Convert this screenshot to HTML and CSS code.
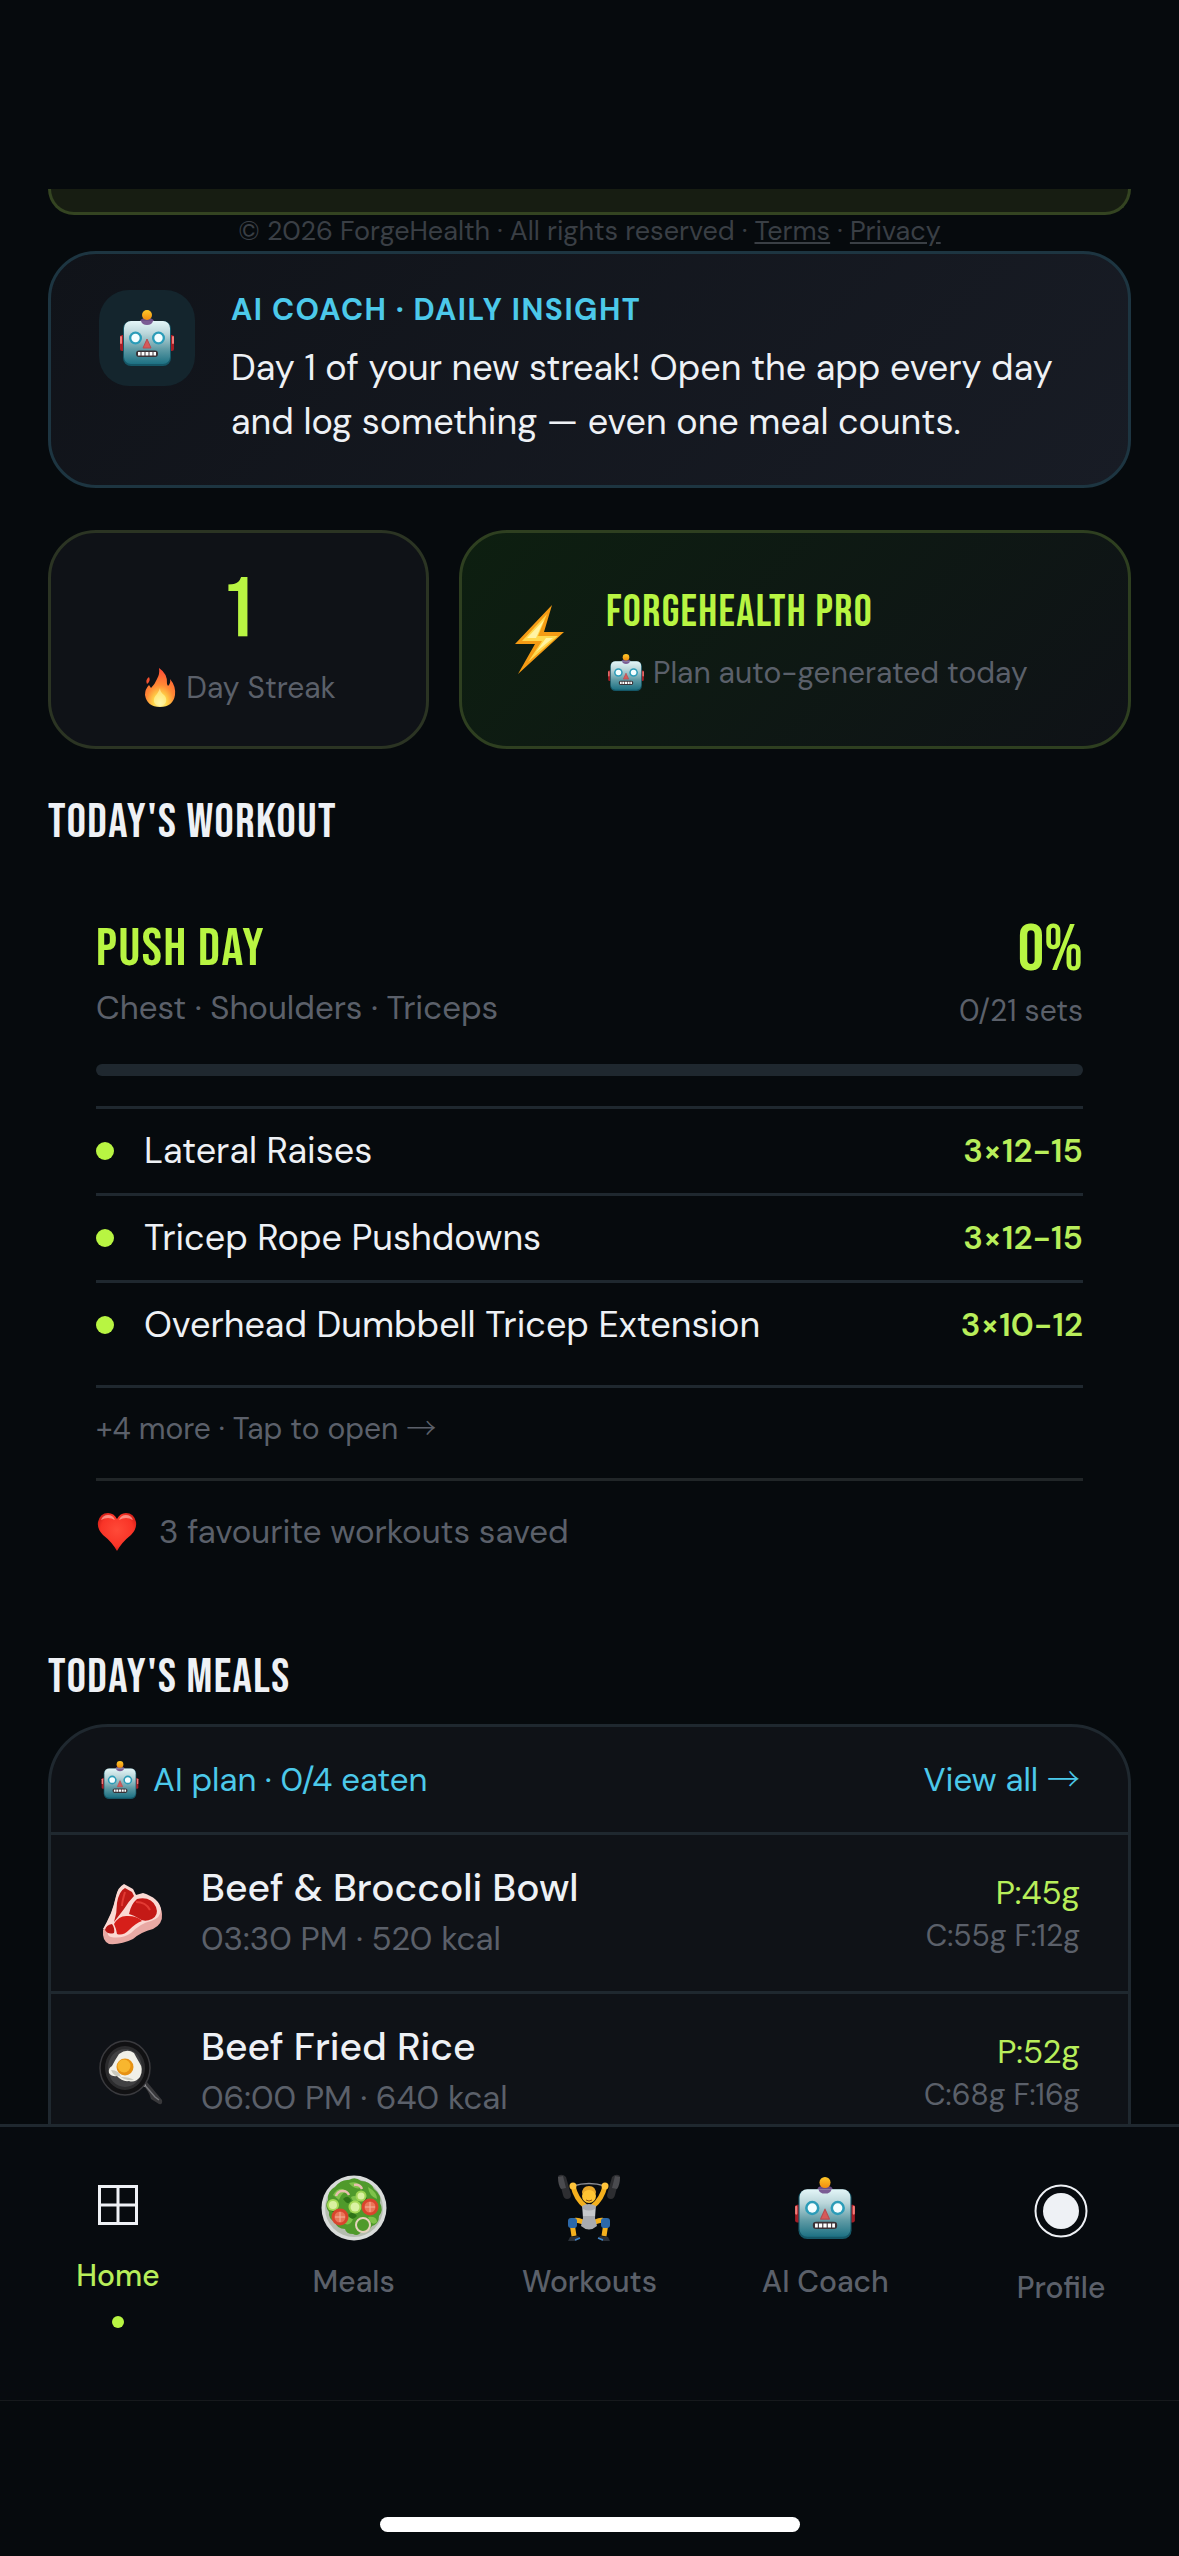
FILE: index.html
```html
<!DOCTYPE html>
<html lang="en">
<head>
  <meta charset="UTF-8" />
  <meta name="viewport" content="width=device-width, initial-scale=1.0" />
  <title>ForgeHealth</title>
  <link rel="stylesheet" href="styles.css">
</head>
<body>
  <!-- shared robot icon -->
  <svg class="sprite" aria-hidden="true">
    <defs>
      <linearGradient id="botFace" x1="0" y1="0" x2="0" y2="1">
        <stop offset="0" stop-color="#e4f6f8" />
        <stop offset="0.3" stop-color="#b9d5d9" />
        <stop offset="0.65" stop-color="#619ca6" />
        <stop offset="1" stop-color="#1d7183" />
      </linearGradient>
      <linearGradient id="botBall" x1="0" y1="0" x2="0" y2="1">
        <stop offset="0" stop-color="#ffc928" />
        <stop offset="1" stop-color="#f08c10" />
      </linearGradient>
    </defs>
    <symbol id="robot" viewBox="0 0 54 56">
      <rect x="0" y="25" width="6" height="16" rx="2" fill="#a51d25" />
      <rect x="48" y="25" width="6" height="16" rx="2" fill="#a51d25" />
      <rect x="0" y="26" width="2" height="8" rx="1" fill="#f27b78" />
      <rect x="52" y="26" width="2" height="8" rx="1" fill="#f27b78" />
      <path d="M20 11q1-3 7-3t7 3q-1 5-7 5t-7-5z" fill="#6c4f86" />
      <circle cx="27" cy="5" r="5" fill="url(#botBall)" />
      <rect x="3" y="11" width="48" height="45" rx="8" fill="#155767" />
      <rect x="4" y="11" width="46" height="43" rx="7" fill="url(#botFace)" />
      <path d="M21 11h12q-1 4-6 4t-6-4z" fill="#7a5c94" />
      <circle cx="15.5" cy="28" r="6.5" fill="#2b9cb8" />
      <circle cx="38.5" cy="28" r="6.5" fill="#2b9cb8" />
      <circle cx="15.5" cy="28" r="4.2" fill="#f4feff" />
      <circle cx="38.5" cy="28" r="4.2" fill="#f4feff" />
      <path d="M27 29l4 9h-8z" fill="#d65a59" stroke="#b94a50" stroke-linejoin="round" />
      <rect x="16" y="40.500" width="22" height="6.500" rx="3" fill="#3a3236" />
      <path d="M18 42h2.500v3.500h-2.500zM21.500 42h3v3.500h-3zM25.500 42h3v3.500h-3zM29.500 42h3v3.500h-3zM33.500 42h2.500v3.500h-2.500z" fill="#fff" />
    </symbol>
  </svg>

  <div class="status-area"></div>

  <main class="content">
    <div class="banner"></div>
    <p class="legal">© 2026 ForgeHealth · All rights reserved · <a href="#">Terms</a> · <a href="#">Privacy</a></p>

    <section class="card insight">
      <div class="insight-icon"><svg width="54" height="56"><use href="#robot" /></svg></div>
      <div>
        <h3 class="insight-label">AI COACH · DAILY INSIGHT</h3>
        <p class="insight-text">Day 1 of your new streak! Open the app every day and log something — even one meal counts.</p>
      </div>
    </section>

    <div class="stats">
      <div class="card streak">
        <div class="streak-number">1</div>
        <div class="with-icon small">
          <svg width="38" height="40" viewBox="0 0 34 40">
            <defs>
              <radialGradient id="flame" cx="0.5" cy="0.9" r="0.85">
                <stop offset="0" stop-color="#fff8b0" />
                <stop offset="0.25" stop-color="#ffd84a" />
                <stop offset="0.55" stop-color="#ff8a35" />
                <stop offset="1" stop-color="#ff4f35" />
              </radialGradient>
            </defs>
            <path d="M16 0q9 6 8 16l1 2q3-3 2-7 6 7 5 16-2 12-15 12T2 27q0-6 4-10l2 3q4-4 6-9 3-5 2-11z" fill="url(#flame)" />
            <path d="M6 9q-4 3-2 7 4-3 2-7z" fill="#f4502f" />
            <path d="M17 20q0 4 4 7 3 3 2 7-2 4-6 4t-6-4q-1-4 3-8 2-3 3-6z" fill="#fff6a8" opacity="0.6" />
          </svg>
          <span>Day Streak</span>
        </div>
      </div>

      <div class="card pro">
        <svg width="60" height="72" viewBox="0 0 60 72">
          <path d="M42 1L5 40h20L8 70l46-42H34z" fill="#f49b14" />
          <path d="M37 10L12 37h20L18 58l30-26H28z" fill="#ffd84d" />
          <path d="M34 16L17 34h19L26 48l17-14H26z" fill="#fff3a3" />
        </svg>
        <div class="pro-body">
          <h3 class="pro-title">FORGEHEALTH PRO</h3>
          <div class="with-icon small">
            <svg width="40" height="37"><use href="#robot" /></svg>
            <span>Plan auto-generated today</span>
          </div>
        </div>
      </div>
    </div>

    <h2>TODAY'S WORKOUT</h2>
    <section class="workout">
      <div class="workout-head">
        <div>
          <h3 class="workout-name">PUSH DAY</h3>
          <p class="workout-sub">Chest · Shoulders · Triceps</p>
        </div>
        <div class="workout-score">
          <div class="percent">0%</div>
          <p class="sets">0/21 sets</p>
        </div>
      </div>
      <div class="progress"></div>
      <ul class="exercises">
        <li><span class="dot"></span><span class="name">Lateral Raises</span><span class="reps">3×12-15</span></li>
        <li><span class="dot"></span><span class="name">Tricep Rope Pushdowns</span><span class="reps">3×12-15</span></li>
        <li><span class="dot"></span><span class="name">Overhead Dumbbell Tricep Extension</span><span class="reps">3×10-12</span></li>
      </ul>
      <a class="more" href="#">+4 more · Tap to open <span class="arrow">→</span></a>
      <div class="favourites">
        <svg width="42" height="42" viewBox="0 0 42 42">
          <defs>
            <radialGradient id="heart" cx="0.5" cy="0.45" r="0.6">
              <stop offset="0" stop-color="#ff4a38" />
              <stop offset="0.7" stop-color="#f93427" />
              <stop offset="1" stop-color="#c81a14" />
            </radialGradient>
          </defs>
          <path d="M21 40Q16 31 7 24 1 18 2 11 4 2 12 2q6 0 9 6 3-6 9-6 8 0 10 9 1 7-5 13-9 7-14 16z" fill="url(#heart)" />
          <path d="M5 9q2-5 7-5t7 5q-7-4-14 0zM23 9q2-5 7-5t7 5q-7-4-14 0z" fill="#ffb0a6" opacity="0.7" />
        </svg>
        <span>3 favourite workouts saved</span>
      </div>
    </section>

    <h2>TODAY'S MEALS</h2>
    <section class="card meals">
      <div class="meals-head">
        <div class="with-icon">
          <svg width="42" height="38"><use href="#robot" /></svg>
          <span>AI plan · 0/4 eaten</span>
        </div>
        <a href="#">View all <span class="arrow">→</span></a>
      </div>
      <div class="meal">
        <svg width="66" height="66" viewBox="0 0 66 66">
          <path d="M4 50q4-7 8-16 3-8 5-17 2-9 8-12l9 5 3 6 7-2q18 6 19 20 1 10-9 15-12 3-20 10-12 6-24 5-7-3-6-14z" fill="#e9a9a4" />
          <path d="M4 49q4-7 8-16 3-8 5-17 2-9 8-12l9 5 3 6 7-2q16 5 18 16 0 9-10 12-10 2-20 12-9 6-20 4-4-1-4-8z" fill="#fbd9d3" />
          <path d="M18 23q2-12 8-15l7 4 2 4q-6 6-10 13l-10 13q3-9 3-19z" fill="#bf1a17" />
          <path d="M38 19q14-3 19 8 3 8-4 12-8 4-14-1-5-3-9-4 2-10 8-15z" fill="#c41916" />
          <path d="M15 44q5-9 14-8 9 0 14 5-6 2-13 9-6 6-12 4-1-6-3-10z" fill="#d61f1a" />
          <path d="M6 50q1-5 7-6 3 4 2 9-6 2-9-3z" fill="#b81613" />
          <path d="M37 22q10 0 14 8M26 12q-3 10-3 14" fill="none" stroke="#e23a33" stroke-width="2" />
        </svg>
        <div class="meal-info">
          <h4>Beef &amp; Broccoli Bowl</h4>
          <p>03:30 PM · 520 kcal</p>
        </div>
        <div class="macros"><div class="protein">P:45g</div><div class="rest">C:55g F:12g</div></div>
      </div>
      <div class="meal">
        <svg width="66" height="66" viewBox="0 0 66 66">
          <path d="M43 45l5-2 15 18q1 5-3 4L52 60q-2-8-9-15z" fill="#38383b" />
          <path d="M44 44l12 14 4 3" stroke="#77777b" stroke-width="1.500" fill="none" />
          <circle cx="44" cy="45" r="3" fill="#a8a8ac" />
          <ellipse cx="26" cy="29" rx="25" ry="27" fill="#111113" stroke="#3a3a3e" stroke-width="1.500" />
          <ellipse cx="26" cy="29" rx="20" ry="22" fill="#2c2c2e" />
          <ellipse cx="26" cy="29" rx="17" ry="19" fill="#414143" />
          <path d="M20 15q8-6 15-1 2 4 5 9 5 7 1 15-5 6-11 4-7 1-12-5-5 1-8-3-1-5 3-7 3-6 7-12z" fill="#f1f0e8" />
          <path d="M12 31q8 0 10 7 9 0 13 3-9 1-15-4-5 1-8-6z" fill="#c9c9bd" />
          <circle cx="26" cy="28" r="8.500" fill="#e79213" />
          <circle cx="25" cy="27" r="6.500" fill="#f8b62e" />
        </svg>
        <div class="meal-info">
          <h4>Beef Fried Rice</h4>
          <p>06:00 PM · 640 kcal</p>
        </div>
        <div class="macros"><div class="protein">P:52g</div><div class="rest">C:68g F:16g</div></div>
      </div>
    </section>
  </main>

  <nav class="tabs">
    <a class="tab active" href="#">
      <span class="tab-icon short">
        <svg width="40" height="40" viewBox="0 0 40 40" fill="none" stroke="#eef1f5" stroke-width="3">
          <path d="M1.500 1.500h37v37h-37zM20 1v38M1 20h38" />
        </svg>
      </span>
      <span>Home</span>
      <span class="tab-dot"></span>
    </a>
    <a class="tab" href="#">
      <span class="tab-icon">
        <svg width="66" height="66" viewBox="0 0 66 66">
          <circle cx="33" cy="33" r="32.500" fill="#d9dcda" />
          <circle cx="33" cy="33" r="29" fill="#b5bdb0" />
          <path d="M14 12q6-8 14-7 6-4 12 1 9 0 13 8 8 6 6 14 4 7-1 13 0 8-7 10-3 6-10 5-4 6-9 3-7 0-8-5-8 0-10-7-7-3-6-10-5-6-1-12-1-9 7-13z" fill="#4f9a2b" />
          <path d="M12 20q6-10 13-4-5 3-7 9zM28 8q9-3 12 5-7 2-12-5zM47 12q9 5 9 12-8-3-9-12zM20 47q6-8 12-3-3 9-12 3zM47 42q9-1 9 5-5 5-9-5zM30 22q6-3 8 4-6 3-8-4z" fill="#7fc24a" />
          <path d="M22 24q5-5 8 1-2 7-8-1zM42 20q5 2 5 7-6-1-5-7zM27 40q5-5 9 1-5 6-9-1zM14 38q-6-2-5-7 6 1 5 7z" fill="#2f7418" />
          <path d="M15 21a7 7 0 0 1 13-1M33 10q6-1 8 4" fill="none" stroke="#e7bfae" stroke-width="2.500" />
          <circle cx="12" cy="30" r="6" fill="#a6d957" /><circle cx="12" cy="30" r="4" fill="#d9f0a0" />
          <circle cx="40" cy="21" r="5.500" fill="#9fd352" /><circle cx="40" cy="21" r="3.500" fill="#d9f0a0" />
          <circle cx="34" cy="32" r="6.500" fill="#a6d957" /><circle cx="34" cy="32" r="4.500" fill="#daf2a4" />
          <circle cx="49" cy="32" r="8.500" fill="#d8452d" /><circle cx="49" cy="32" r="5.500" fill="#ea7658" />
          <circle cx="19" cy="42" r="8.500" fill="#d8452d" /><circle cx="19" cy="42" r="5.500" fill="#ea7658" />
          <path d="M49 27v10M44 32h10M19 37v10M14 42h10" stroke="#f5b39c" />
          <circle cx="42" cy="50" r="7" fill="none" stroke="#e6d3bd" stroke-width="2" />
        </svg>
      </span>
      <span>Meals</span>
    </a>
    <a class="tab" href="#">
      <span class="tab-icon">
        <svg width="66" height="68" viewBox="0 0 66 68">
          <path d="M17 12q16-5 32 0" fill="none" stroke="#8b8d92" stroke-width="1.500" />
          <path d="M2 2q4-3 8 1l5 18q0 4-4 4-3 0-4-4z" fill="#2d2e31" />
          <path d="M64 2q-4-3-8 1l-5 18q0 4 4 4 3 0 4-4z" fill="#2d2e31" />
          <path d="M2 3q0 8 3 12l5-1-3-12zM64 3q0 8-3 12l-5-1 3-12z" fill="#4a4b4f" />
          <path d="M17 12q3 13 12 20M49 12q-3 13-12 20" stroke="#f4b01d" stroke-width="5" stroke-linecap="round" fill="none" />
          <circle cx="17" cy="12" r="3.500" fill="#ffc43a" /><circle cx="49" cy="12" r="3.500" fill="#ffc43a" />
          <path d="M27 48q-9-4-11 1l2 13M39 48q9-4 11 1l-2 13" fill="none" stroke="#f4b01d" stroke-width="5" stroke-linejoin="round" />
          <path d="M26 32q7-4 14 0l-1 12 2 8q-8 7-16 0l2-8z" fill="#a9abb0" />
          <path d="M27 35q6 3 12 0v7H27z" fill="#c6c8cb" />
          <circle cx="33" cy="22" r="7" fill="#ffc532" />
          <path d="M26 20q0-8 7-8t7 8q-3-4-7-4t-7 4z" fill="#e9a828" />
          <path d="M30 26q3 2 6 0" stroke="#8f4c12" fill="none" />
          <rect x="12" y="44" width="9" height="10" rx="3" fill="#2c68a8" />
          <rect x="45" y="44" width="9" height="10" rx="3" fill="#2c68a8" />
          <path d="M14 63l8-1 2 2-4 3h-8zM52 63l-8-1-2 2 4 3h8z" fill="#2a3038" />
          <path d="M19 66l5-2M47 66l-5-2" stroke="#3e86cc" stroke-width="1.500" />
        </svg>
      </span>
      <span>Workouts</span>
    </a>
    <a class="tab" href="#">
      <span class="tab-icon"><svg width="60" height="62"><use href="#robot" /></svg></span>
      <span>AI Coach</span>
    </a>
    <a class="tab" href="#">
      <span class="tab-icon tall">
        <svg width="54" height="54" viewBox="0 0 54 54">
          <circle cx="27" cy="27" r="25.500" fill="none" stroke="#eef1f5" stroke-width="2" />
          <circle cx="27" cy="27" r="18" fill="#eef1f5" />
        </svg>
      </span>
      <span>Profile</span>
    </a>
  </nav>

  <div class="home-area"><div class="home-bar"></div></div>
</body>
</html>
```
FILE: styles.css
```css
* {
  box-sizing: border-box;
}

body {
  margin: 0;
  height: 100vh;
  display: flex;
  flex-direction: column;
  background: #060a0d;
  color: #eef1f5;
  font-family: "DM Sans", Inter, sans-serif;
  font-size: 33px;
}

h2, h3, h4, p, ul {
  margin: 0;
  padding: 0;
  font-weight: 400;
}

svg {
  display: block;
  flex: none;
}

a {
  color: inherit;
  text-decoration: none;
}

.sprite {
  position: absolute;
  width: 0;
  height: 0;
}

.status-area {
  height: 189px;
  flex: none;
}

.content {
  flex: 1;
  min-height: 0;
  overflow: hidden;
  padding: 0 48px;
}

.banner {
  height: 26px;
  background: #171d12;
  border: 3px solid #344421;
  border-top: 0;
  border-radius: 0 0 30px 30px;
}

.legal {
  padding-bottom: 4px;
  text-align: center;
  font-size: 27px;
  line-height: 32px;
  color: #3a3f45;
}

.legal a {
  text-decoration: underline;
}

.arrow {
  font-family: "Noto Sans CJK JP", sans-serif;
  font-weight: 300;
  line-height: 1;
}

.card {
  border: 3px solid #1f282f;
  border-radius: 48px;
  background: #0f1217;
}

/* AI insight */
.insight {
  display: flex;
  gap: 36px;
  padding: 36px 48px;
  background: linear-gradient(135deg, #101319, #181c25);
  border-color: #1d3541;
}

.insight-icon {
  flex: none;
  width: 96px;
  height: 96px;
  display: flex;
  align-items: center;
  justify-content: center;
  border-radius: 30px;
  background: #14252d;
}

.insight-label {
  margin-bottom: 12px;
  font-size: 30px;
  font-weight: 700;
  line-height: 39px;
  letter-spacing: 0.05em;
  color: #4cc9ea;
}

.insight-text {
  font-size: 36px;
  line-height: 54px;
}

/* streak and plan */
.stats {
  display: grid;
  grid-template-columns: 381fr 672fr;
  gap: 30px;
  margin-top: 42px;
}

.streak {
  padding: 30px 0 36px;
  text-align: center;
  border-color: #2b3423;
}

.streak-number {
  margin-bottom: 6px;
  font-family: "Bebas Neue", sans-serif;
  font-size: 84px;
  line-height: 96px;
  color: #b8f542;
}

.with-icon {
  display: flex;
  align-items: center;
  gap: 12px;
}

.small {
  gap: 7px;
  font-size: 30px;
  color: #5b606a;
}

.streak .small {
  justify-content: center;
  line-height: 45px;
}

.pro {
  display: flex;
  align-items: center;
  gap: 36px;
  padding: 0 48px;
  background: linear-gradient(135deg, #0d1f10, #0f1217);
  border-color: #2e3f20;
}

.pro-title {
  margin-bottom: 12px;
  font-family: "Bebas Neue", sans-serif;
  font-size: 45px;
  line-height: 54px;
  letter-spacing: 0.03em;
  color: #b8f542;
}

.pro .small {
  line-height: 42px;
}

h2 {
  margin: 45px 0 17px;
  font-family: "Bebas Neue", sans-serif;
  font-size: 48px;
  line-height: 58px;
  letter-spacing: 0.03em;
}

/* workout */
.workout {
  padding: 51px 48px 48px;
}

.workout-head {
  display: flex;
  justify-content: space-between;
  margin-bottom: 33px;
  color: #5b606a;
}

.workout-name {
  margin-bottom: 6px;
  font-family: "Bebas Neue", sans-serif;
  font-size: 54px;
  line-height: 58px;
  letter-spacing: 0.03em;
  color: #b8f542;
}

.workout-sub {
  line-height: 47px;
}

.workout-score {
  text-align: right;
}

.percent {
  margin-bottom: 9px;
  font-family: "Bebas Neue", sans-serif;
  font-size: 66px;
  line-height: 62px;
  color: #b8f542;
}

.sets {
  font-size: 30px;
  line-height: 40px;
}

.progress {
  height: 12px;
  margin-bottom: 30px;
  border-radius: 6px;
  background: #1f282f;
}

.exercises {
  list-style: none;
  margin-bottom: 18px;
}

.exercises li {
  display: flex;
  align-items: center;
  gap: 30px;
  border-top: 3px solid #1f282f;
  font-size: 36px;
  line-height: 84px;
}

.dot {
  width: 18px;
  height: 18px;
  border-radius: 50%;
  background: #b8f542;
}

.name {
  flex: 1;
}

.reps {
  font-size: 33px;
  font-weight: 600;
  color: #b8ee5a;
}

.more {
  display: block;
  padding: 18px 0 27px;
  border-top: 3px solid #1f282f;
  font-size: 30px;
  line-height: 45px;
  color: #5b606a;
}

.favourites {
  display: flex;
  align-items: center;
  gap: 21px;
  padding-top: 27px;
  border-top: 3px solid #212628;
  line-height: 48px;
  color: #5b606a;
}

/* meals */
.meals {
  border-radius: 60px;
}

.meals-head {
  display: flex;
  align-items: center;
  justify-content: space-between;
  padding: 0 48px;
  line-height: 105px;
  color: #4cc9ea;
}

.meal {
  display: flex;
  align-items: center;
  gap: 36px;
  padding: 27px 48px;
  border-top: 3px solid #1f282f;
}

.meal:last-child {
  padding-bottom: 72px;
}

.meal-info {
  flex: 1;
}

.meal-info h4 {
  font-size: 39px;
  font-weight: 500;
  line-height: 51px;
}

.meal-info p {
  line-height: 51px;
  color: #5b606a;
}

.macros {
  text-align: right;
}

.protein {
  line-height: 45px;
  color: #b8ee5a;
}

.rest {
  font-size: 30px;
  line-height: 42px;
  color: #5b606a;
}

/* bottom tabs */
.tabs {
  flex: none;
  display: grid;
  grid-template-columns: repeat(5, 1fr);
  padding: 39px 0 72px;
  background: #070b0f;
  border-top: 3px solid #1f282f;
  border-bottom: 1px solid #16191c;
}

.tab {
  display: flex;
  flex-direction: column;
  align-items: center;
  font-size: 30px;
  font-weight: 500;
  line-height: 39px;
  color: #5b606a;
}

.tab.active {
  color: #b8ee5a;
}

.tab-icon {
  height: 84px;
  margin-bottom: 12px;
  display: flex;
  align-items: center;
}

.tab-icon.short {
  height: 78px;
}

.tab-icon.tall {
  height: 90px;
}

.tab-dot {
  width: 12px;
  height: 12px;
  margin-top: 21px;
  border-radius: 50%;
  background: #b8f542;
}

.home-area {
  flex: none;
  height: 155px;
  display: flex;
  align-items: flex-end;
  justify-content: center;
  padding-bottom: 24px;
}

.home-bar {
  width: 420px;
  height: 15px;
  border-radius: 8px;
  background: #fff;
}
```
